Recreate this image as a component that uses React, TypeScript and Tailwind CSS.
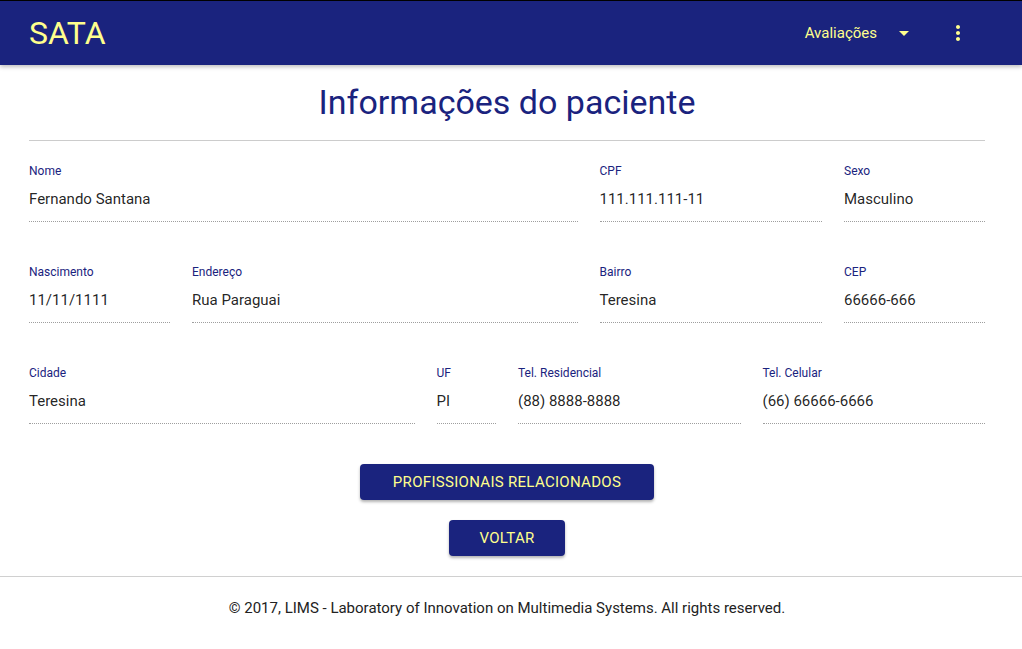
import React from 'react';

type Field = { label: string; value: string; span: string };

const rows: Field[][] = [
  [
    { label: 'Nome', value: 'Fernando Santana', span: 'col-span-7' },
    { label: 'CPF', value: '111.111.111-11', span: 'col-span-3' },
    { label: 'Sexo', value: 'Masculino', span: 'col-span-2' },
  ],
  [
    { label: 'Nascimento', value: '11/11/1111', span: 'col-span-2' },
    { label: 'Endereço', value: 'Rua Paraguai', span: 'col-span-5' },
    { label: 'Bairro', value: 'Teresina', span: 'col-span-3' },
    { label: 'CEP', value: '66666-666', span: 'col-span-2' },
  ],
  [
    { label: 'Cidade', value: 'Teresina', span: 'col-span-5' },
    { label: 'UF', value: 'PI', span: 'col-span-1' },
    { label: 'Tel. Residencial', value: '(88) 8888-8888', span: 'col-span-3' },
    { label: 'Tel. Celular', value: '(66) 66666-6666', span: 'col-span-3' },
  ],
];

const InfoField: React.FC<{ field: Field }> = ({ field }) => (
  <div className={field.span}>
    <div className="text-[12px] leading-[16px] text-[#1a237e]">{field.label}</div>
    <div className="mt-[10px] text-[15px] leading-[20px] text-[rgba(0,0,0,0.87)]">{field.value}</div>
    <div className="mt-[12px] border-b border-dotted border-[#9e9e9e]" />
  </div>
);

export default function App() {
  return (
    <div className="min-h-[649px] bg-white font-['Roboto',sans-serif]">
      {/* Toolbar */}
      <header className="relative z-10 flex h-[65px] items-center border-t border-black bg-[#1a237e] pl-[29px] pr-[52px] text-[#ffff8d] shadow-[0_2px_4px_rgba(0,0,0,0.25)]">
        <span className="text-[32px] leading-none">SATA</span>
        <div className="ml-auto flex items-center">
          <span className="text-[15px]">Avaliações</span>
          <svg className="ml-[22px]" width="10" height="5" viewBox="0 0 10 5">
            <path d="M0 0h10L5 5z" fill="currentColor" />
          </svg>
          <svg className="ml-[37px]" width="24" height="24" viewBox="0 0 24 24" fill="currentColor">
            <path d="M12 8c1.1 0 2-.9 2-2s-.9-2-2-2-2 .9-2 2 .9 2 2 2zm0 2c-1.1 0-2 .9-2 2s.9 2 2 2 2-.9 2-2-.9-2-2-2zm0 6c-1.1 0-2 .9-2 2s.9 2 2 2 2-.9 2-2-.9-2-2-2z" />
          </svg>
        </div>
      </header>

      {/* Content */}
      <main className="ml-[29px] mr-[37px]">
        <h1 className="mt-[15px] mb-[16px] text-center text-[34px] leading-[44px] text-[#1a237e]">
          Informações do paciente
        </h1>
        <hr className="border-t border-[#cccccc]" />

        <div className="mt-[22px] flex flex-col gap-y-[42px]">
          {rows.map((row, i) => (
            <div key={i} className="grid grid-cols-12 gap-x-[22px]">
              {row.map((f) => (
                <InfoField key={f.label} field={f} />
              ))}
            </div>
          ))}
        </div>

        <div className="mt-[40px] flex flex-col items-center gap-[20px]">
          <button className="h-[36px] w-[294px] rounded-[4px] bg-[#1a237e] text-[15px] tracking-[0.02em] text-[#ffff8d] shadow-[0_2px_3px_rgba(0,0,0,0.3)]">
            PROFISSIONAIS RELACIONADOS
          </button>
          <button className="h-[36px] w-[116px] rounded-[4px] bg-[#1a237e] text-[15px] tracking-[0.02em] text-[#ffff8d] shadow-[0_2px_3px_rgba(0,0,0,0.3)]">
            VOLTAR
          </button>
        </div>
      </main>

      {/* Footer */}
      <footer className="mt-[20px] border-t border-[#d0d0d0] pt-[21px] pr-[8px] pb-[31px] text-center text-[15px] leading-[20px] text-[#222222]">
        © 2017, LIMS - Laboratory of Innovation on Multimedia Systems. All rights reserved.
      </footer>
    </div>
  );
}
